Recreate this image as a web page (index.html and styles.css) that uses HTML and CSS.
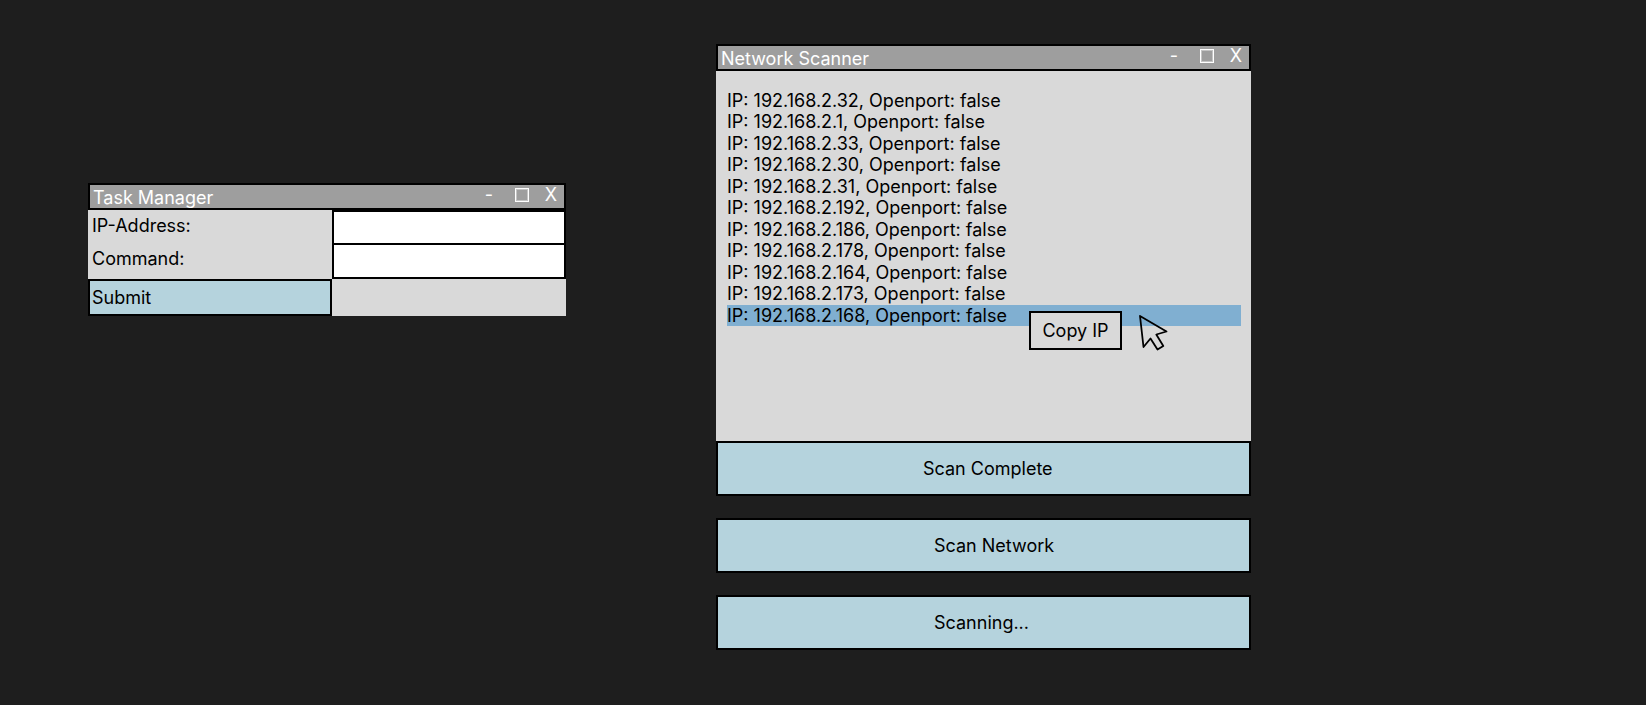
FILE: index.html
```html
<!DOCTYPE html>
<html lang="en">
<head>
<meta charset="utf-8">
<title>Network Scanner</title>
<link rel="stylesheet" href="styles.css">
</head>
<body>
<main class="desktop">
  <section class="window task-manager">
    <header class="titlebar">
      <h1 class="title">Task Manager</h1>
      <div class="controls">
        <button class="control minimize" type="button" aria-label="Minimize">-</button>
        <button class="control maximize" type="button" aria-label="Maximize"><span class="square"></span></button>
        <button class="control close" type="button" aria-label="Close">X</button>
      </div>
    </header>
    <form class="task-form">
      <label class="label" for="ip">IP-Address:</label>
      <input class="field" id="ip" type="text">
      <label class="label" for="command">Command:</label>
      <input class="field" id="command" type="text">
      <button class="action submit" type="button">Submit</button>
    </form>
  </section>

  <section class="scanner">
    <div class="window">
      <header class="titlebar">
        <h1 class="title">Network Scanner</h1>
        <div class="controls">
          <button class="control minimize" type="button" aria-label="Minimize">-</button>
          <button class="control maximize" type="button" aria-label="Maximize"><span class="square"></span></button>
          <button class="control close" type="button" aria-label="Close">X</button>
        </div>
      </header>
      <div class="results">
        <ul class="hosts">
          <li>IP: 192.168.2.32, Openport: false</li>
          <li>IP: 192.168.2.1, Openport: false</li>
          <li>IP: 192.168.2.33, Openport: false</li>
          <li>IP: 192.168.2.30, Openport: false</li>
          <li>IP: 192.168.2.31, Openport: false</li>
          <li>IP: 192.168.2.192, Openport: false</li>
          <li>IP: 192.168.2.186, Openport: false</li>
          <li>IP: 192.168.2.178, Openport: false</li>
          <li>IP: 192.168.2.164, Openport: false</li>
          <li>IP: 192.168.2.173, Openport: false</li>
          <li class="selected">IP: 192.168.2.168, Openport: false
            <button class="copy" type="button">Copy IP</button>
            <svg class="cursor" viewBox="0 0 30 38" width="30" height="38" aria-hidden="true"><path d="M2 2 28.500 17.500 18.300 20.500 25.300 32 19.500 35.500 12.500 24.500 5.500 33Z" fill="none" stroke="#000" stroke-width="1.800" stroke-linejoin="round"/></svg>
          </li>
        </ul>
      </div>
      <button class="action scan complete" type="button">Scan Complete</button>
    </div>
    <button class="action scan" type="button">Scan Network</button>
    <button class="action scan" type="button">Scanning...</button>
  </section>
</main>
</body>
</html>
```
FILE: styles.css
```css
* {
  box-sizing: border-box;
}

body {
  margin: 0;
  background: #1e1e1e;
  color: #000;
  font: 18px/22px Inter, sans-serif;
}

button,
input {
  margin: 0;
  border-radius: 0;
  color: inherit;
  font: inherit;
}

.desktop {
  display: grid;
  grid-template-columns: minmax(0, 478fr) minmax(0, 535fr);
  column-gap: 150px;
  align-items: start;
  padding: 44px 395px 55px 88px;
}

.task-manager {
  margin-top: 139px;
}

.titlebar {
  display: flex;
  justify-content: space-between;
  height: 27px;
  padding: 2px 7px 0 3px;
  border: 2px solid #000;
  background: #9e9e9e;
  color: #fff;
}

.title {
  margin: 0;
  font-size: 18px;
  font-weight: 400;
}

.controls {
  display: flex;
  height: 16px;
}

.control {
  display: flex;
  justify-content: center;
  align-items: center;
  width: 12px;
  padding: 0;
  border: 0;
  background: none;
}

.maximize {
  width: 14px;
  margin: 0 16px 0 20px;
}

.square {
  width: 14px;
  height: 14px;
  border: 1px solid #fff;
  box-shadow: inset 0 0 0 1px #c4c4c4;
}

.task-form {
  display: grid;
  grid-template-columns: 244fr 234fr;
  grid-template-rows: 33px 36px 37px;
  background: #d9d9d9;
}

.label {
  padding: 5px 4px;
}

.field {
  width: 100%;
  min-width: 0;
  height: 100%;
  padding: 0 4px;
  border: 2px solid #000;
  border-bottom-width: 0;
  background: #fff;
}

#command {
  border-bottom-width: 2px;
}

.action {
  border: 2px solid #000;
  background: #b5d3dd;
  text-align: left;
}

.submit {
  padding: 0 2px;
}

.results {
  height: 370px;
  padding: 19px 10px 0 11px;
  background: #d9d9d9;
}

.hosts {
  display: grid;
  grid-auto-rows: 1fr;
  height: 236px;
  margin: 0;
  padding: 0;
  line-height: 21px;
  list-style: none;
}

.selected {
  position: relative;
  background: #80afd1;
}

.copy {
  position: absolute;
  top: 6px;
  left: 302px;
  width: 93px;
  height: 39px;
  padding: 0;
  border: 2px solid #000;
  background: #d9d9d9;
}

.cursor {
  position: absolute;
  top: 9px;
  left: 411px;
}

.scanner {
  display: grid;
  gap: 22px;
}

.scan {
  width: 100%;
  height: 55px;
  padding: 0 0 0 216px;
}

.complete {
  display: block;
  padding-left: 205px;
}
```
